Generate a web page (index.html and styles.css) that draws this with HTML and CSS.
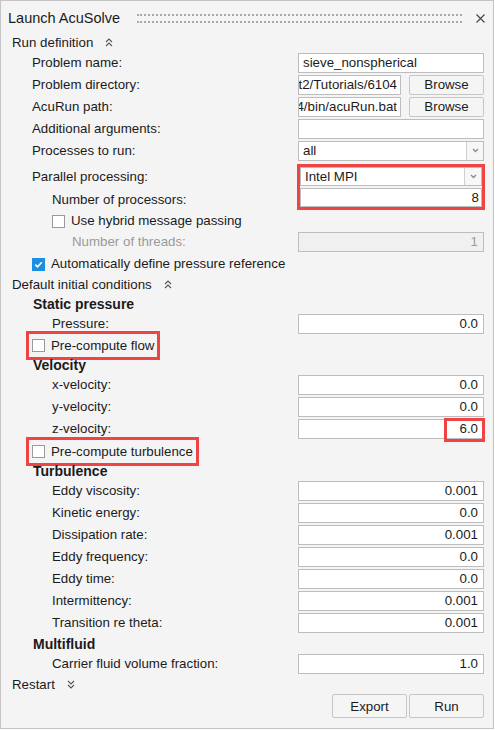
FILE: index.html
```html
<!DOCTYPE html>
<html lang="en">
<head>
  <meta charset="UTF-8">
  <title>Launch AcuSolve</title>
  <link rel="stylesheet" href="styles.css">
</head>
<body>
  <div class="panel">
    <div class="titlebar">
      <span class="title">Launch AcuSolve</span>
      <div class="grip"><i></i><i></i></div>
      <svg class="close" width="9" height="9" viewBox="0 0 9 9"><path d="M0.5 0.5L8.5 8.5M8.5 0.5L0.5 8.5" stroke="#444" stroke-width="1.1"/></svg>
    </div>

    <!-- Run definition -->
    <div class="section">
      <span>Run definition</span>
      <svg width="8" height="9" viewBox="0 0 8 9"><path d="M1 4L4 1L7 4M1 8L4 5L7 8" fill="none" stroke="#555" stroke-width="1.1"/></svg>
    </div>
    <div class="row">
      <div class="lbl l1">Problem name:</div>
      <div class="ctl"><div class="field">sieve_nonspherical</div></div>
    </div>
    <div class="row">
      <div class="lbl l1">Problem directory:</div>
      <div class="ctl">
        <div class="field clip"><span>t2/Tutorials/6104</span></div>
        <button class="btn">Browse</button>
      </div>
    </div>
    <div class="row">
      <div class="lbl l1">AcuRun path:</div>
      <div class="ctl">
        <div class="field clip"><span>4/bin/acuRun.bat</span></div>
        <button class="btn">Browse</button>
      </div>
    </div>
    <div class="row">
      <div class="lbl l1">Additional arguments:</div>
      <div class="ctl"><div class="field"></div></div>
    </div>
    <div class="row">
      <div class="lbl l1">Processes to run:</div>
      <div class="ctl">
        <div class="field select"><span>all</span><b class="drop"><svg width="7" height="5" viewBox="0 0 7 5"><path d="M1 1L3.5 3.5L6 1" fill="none" stroke="#8a8a8a" stroke-width="1.3"/></svg></b></div>
      </div>
    </div>
    <div class="pair">
      <div class="pair-labels">
        <div class="lbl l1">Parallel processing:</div>
        <div class="lbl l2">Number of processors:</div>
      </div>
      <div class="mark-box">
        <div class="field select"><span>Intel MPI</span><b class="drop"><svg width="7" height="5" viewBox="0 0 7 5"><path d="M1 1L3.5 3.5L6 1" fill="none" stroke="#8a8a8a" stroke-width="1.3"/></svg></b></div>
        <div class="field num">8</div>
      </div>
    </div>
    <div class="row plain">
      <div class="lbl l2"><span class="check"><span class="box"></span>Use hybrid message passing</span></div>
    </div>
    <div class="row">
      <div class="lbl l3 muted">Number of threads:</div>
      <div class="ctl"><div class="field num disabled">1</div></div>
    </div>
    <div class="row plain">
      <div class="lbl l1"><span class="check"><span class="box on"><svg width="11" height="11" viewBox="0 0 11 11"><path d="M2.3 5.6L4.5 7.8L8.8 3.3" fill="none" stroke="#fff" stroke-width="1.6"/></svg></span>Automatically define pressure reference</span></div>
    </div>

    <!-- Default initial conditions -->
    <div class="section">
      <span>Default initial conditions</span>
      <svg width="8" height="9" viewBox="0 0 8 9"><path d="M1 4L4 1L7 4M1 8L4 5L7 8" fill="none" stroke="#555" stroke-width="1.1"/></svg>
    </div>
    <div class="head">Static pressure</div>
    <div class="row">
      <div class="lbl l2">Pressure:</div>
      <div class="ctl"><div class="field num">0.0</div></div>
    </div>
    <div class="row plain">
      <div class="lbl l1"><span class="check flagged"><span class="box"></span>Pre-compute flow</span></div>
    </div>
    <div class="head">Velocity</div>
    <div class="row">
      <div class="lbl l2">x-velocity:</div>
      <div class="ctl"><div class="field num">0.0</div></div>
    </div>
    <div class="row">
      <div class="lbl l2">y-velocity:</div>
      <div class="ctl"><div class="field num">0.0</div></div>
    </div>
    <div class="row">
      <div class="lbl l2">z-velocity:</div>
      <div class="ctl"><div class="field num">6.0<span class="mark-val"></span></div></div>
    </div>
    <div class="row plain">
      <div class="lbl l1"><span class="check flagged"><span class="box"></span>Pre-compute turbulence</span></div>
    </div>
    <div class="head">Turbulence</div>
    <div class="row">
      <div class="lbl l2">Eddy viscosity:</div>
      <div class="ctl"><div class="field num">0.001</div></div>
    </div>
    <div class="row">
      <div class="lbl l2">Kinetic energy:</div>
      <div class="ctl"><div class="field num">0.0</div></div>
    </div>
    <div class="row">
      <div class="lbl l2">Dissipation rate:</div>
      <div class="ctl"><div class="field num">0.001</div></div>
    </div>
    <div class="row">
      <div class="lbl l2">Eddy frequency:</div>
      <div class="ctl"><div class="field num">0.0</div></div>
    </div>
    <div class="row">
      <div class="lbl l2">Eddy time:</div>
      <div class="ctl"><div class="field num">0.0</div></div>
    </div>
    <div class="row">
      <div class="lbl l2">Intermittency:</div>
      <div class="ctl"><div class="field num">0.001</div></div>
    </div>
    <div class="row">
      <div class="lbl l2">Transition re theta:</div>
      <div class="ctl"><div class="field num">0.001</div></div>
    </div>
    <div class="head">Multifluid</div>
    <div class="row">
      <div class="lbl l2">Carrier fluid volume fraction:</div>
      <div class="ctl"><div class="field num">1.0</div></div>
    </div>

    <!-- Restart (collapsed) -->
    <div class="section short">
      <span>Restart</span>
      <svg width="8" height="9" viewBox="0 0 8 9"><path d="M1 1L4 4L7 1M1 5L4 8L7 5" fill="none" stroke="#555" stroke-width="1.1"/></svg>
    </div>

    <div class="footer">
      <button class="btn big">Export</button>
      <button class="btn big">Run</button>
    </div>
  </div>
</body>
</html>
```

FILE: styles.css
```css
body {
  margin: 0;
  font-family: "Liberation Sans", Arial, sans-serif;
  font-size: 13.3px;
  color: #1b1b1b;
}
.panel {
  width: 494px;
  height: 729px;
  box-sizing: border-box;
  border: 1px solid #c4c4c4;
  background: #f4f4f4;
  display: flex;
  flex-direction: column;
}
.titlebar {
  height: 32px;
  display: flex;
  align-items: center;
  padding: 3px 8px 0 7px;
  box-sizing: border-box;
}
.title {
  font-size: 14.5px;
}
.grip {
  flex: 1;
  margin: 0 14px 0 17px;
  display: flex;
  flex-direction: column;
  gap: 5px;
}
.grip i {
  display: block;
  border-top: 2px dotted #a8a8a8;
}
.close {
  margin-top: 1px;
}
.section {
  height: 20px;
  display: flex;
  align-items: center;
  gap: 12px;
  padding-left: 11px;
}
.section.short {
  height: 18px;
}
.head {
  height: 19px;
  line-height: 19px;
  padding-left: 32px;
  font-weight: bold;
  font-size: 14px;
}
.row {
  display: flex;
  height: 22px;
  padding-right: 9px;
}
.row.plain {
  height: 21px;
  align-items: center;
}
.lbl {
  flex: 1;
  line-height: 20px;
  white-space: nowrap;
}
.row.plain .lbl {
  display: flex;
  align-items: center;
  height: 21px;
}
.l1 { padding-left: 31px; }
.l2 { padding-left: 51px; }
.l3 { padding-left: 71px; }
.muted { color: #9a9a9a; }
.ctl {
  width: 186px;
  height: 20px;
  display: flex;
  gap: 8px;
}
.field {
  position: relative;
  flex: 1;
  height: 20px;
  box-sizing: border-box;
  border: 1px solid #bdbdbd;
  background: #fff;
  padding: 0 5px 0 4px;
  line-height: 18px;
  white-space: nowrap;
  overflow: visible;
}
.field.clip {
  overflow: hidden;
  flex: 0 0 103px;
  padding: 0 3px 0 0;
  display: flex;
  justify-content: flex-end;
}
.field.num {
  text-align: right;
}
.field.disabled {
  background: #f0f0f0;
  color: #9a9a9a;
}
.field.select {
  display: flex;
  padding-right: 0;
}
.field.select span {
  flex: 1;
}
.drop {
  width: 16px;
  border-left: 1px solid #d0d0d0;
  background: #f7f7f7;
  display: flex;
  align-items: center;
  justify-content: center;
}
.btn {
  flex: 0 0 75px;
  height: 20px;
  box-sizing: border-box;
  border: 1px solid #c6c6c6;
  border-radius: 2px;
  background: #f5f5f5;
  font-family: inherit;
  font-size: 13.3px;
  color: #1b1b1b;
  padding: 0;
}
.pair {
  display: flex;
  margin-top: 1px;
  padding-right: 8px;
  height: 47px;
}
.pair-labels {
  flex: 1;
  padding-top: 3px;
  display: flex;
  flex-direction: column;
  gap: 2px;
}
.mark-box {
  width: 182px;
  height: 40px;
  border: 3px solid #ef4444;
  display: flex;
  flex-direction: column;
  gap: 2px;
}
.mark-box .field {
  flex: none;
  height: 19px;
  line-height: 17px;
  padding-right: 2px;
}
.mark-box .field.select {
  padding-right: 0;
}
.check {
  display: inline-flex;
  align-items: center;
  gap: 6px;
  height: 17px;
}
.box {
  width: 13px;
  height: 13px;
  box-sizing: border-box;
  border: 1px solid #9a9a9a;
  background: #fff;
  display: flex;
  align-items: center;
  justify-content: center;
}
.box.on {
  border-color: #1d8fe1;
  background: #1d8fe1;
}
.flagged {
  outline: 3px solid #ef4444;
  outline-offset: 3px;
}
.mark-val {
  position: absolute;
  top: -2px;
  right: -2px;
  bottom: -4px;
  width: 35px;
  border: 3px solid #ef4444;
}
.footer {
  margin-top: auto;
  display: flex;
  justify-content: flex-end;
  gap: 2px;
  padding: 0 9px 10px 0;
}
.btn.big {
  height: 24px;
}
```
